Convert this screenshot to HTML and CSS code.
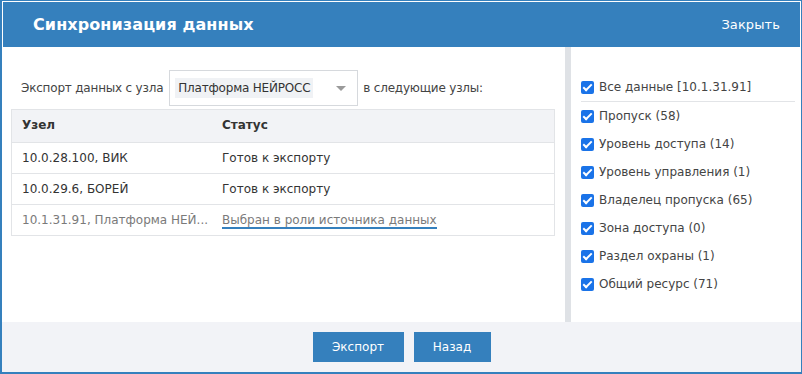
FILE: index.html
```html
<!DOCTYPE html>
<html lang="ru">
<head>
<meta charset="utf-8">
<title>Синхронизация данных</title>
<link rel="stylesheet" href="styles.css">
</head>
<body>
<div class="dialog">
  <div class="header">
    <div class="title">Синхронизация данных</div>
    <div class="close">Закрыть</div>
  </div>
  <div class="content">
    <div class="main">
      <div class="source-row">
        <span class="label">Экспорт данных с узла</span>
        <div class="select">
          <span class="select-value">Платформа НЕЙРОСС</span>
          <span class="arrow"></span>
        </div>
        <span class="label">в следующие узлы:</span>
      </div>
      <div class="table">
        <div class="row head">
          <div class="c1">Узел</div>
          <div class="c2">Статус</div>
        </div>
        <div class="row">
          <div class="c1">10.0.28.100, ВИК</div>
          <div class="c2">Готов к экспорту</div>
        </div>
        <div class="row">
          <div class="c1">10.0.29.6, БОРЕЙ</div>
          <div class="c2">Готов к экспорту</div>
        </div>
        <div class="row source">
          <div class="c1">10.1.31.91, Платформа НЕЙ...</div>
          <div class="c2"><span class="link">Выбран в роли источника данных </span></div>
        </div>
      </div>
    </div>
    <div class="divider"></div>
    <div class="side">
      <label class="check all"><span class="box"></span>Все данные [10.1.31.91]</label>
      <div class="sep"></div>
      <label class="check"><span class="box"></span>Пропуск (58)</label>
      <label class="check"><span class="box"></span>Уровень доступа (14)</label>
      <label class="check"><span class="box"></span>Уровень управления (1)</label>
      <label class="check"><span class="box"></span>Владелец пропуска (65)</label>
      <label class="check"><span class="box"></span>Зона доступа (0)</label>
      <label class="check"><span class="box"></span>Раздел охраны (1)</label>
      <label class="check"><span class="box"></span>Общий ресурс (71)</label>
    </div>
  </div>
  <div class="footer">
    <button class="btn export">Экспорт</button>
    <button class="btn back">Назад</button>
  </div>
</div>
</body>
</html>
```
FILE: styles.css
```css
* { box-sizing: border-box; }
html, body { margin: 0; padding: 0; background: #fff; }
body {
  font-family: "DejaVu Sans", Verdana, sans-serif;
  font-size: 12px;
  color: #333;
}
.dialog {
  width: 802px;
  height: 374px;
  border: 1px solid #3580bd;
  border-left-width: 2px;
  border-bottom-width: 2px;
  padding: 1px 1px 0 1px;
  display: flex;
  flex-direction: column;
  background: #fff;
}
.header {
  height: 45px;
  background: #3580bd;
  color: #fff;
  display: flex;
  align-items: center;
  justify-content: space-between;
  padding: 0 20px 0 30px;
  flex: none;
}
.title { font-size: 16px; font-weight: bold; letter-spacing: 0.1px; }
.close { font-size: 13px; letter-spacing: 0.1px; }
.content {
  flex: 1;
  display: flex;
  min-height: 0;
}
.main {
  width: 562px;
  padding: 23px 0 0 8px;
}
.source-row {
  display: flex;
  align-items: center;
  height: 36px;
  padding-left: 10px;
  letter-spacing: -0.2px;
}
.label { color: #444; }
.select {
  width: 189px;
  height: 36px;
  border: 1px solid #d6d9dd;
  margin: 0 5px 0 6px;
  display: flex;
  align-items: center;
  padding: 0 5px;
  justify-content: space-between;
}
.select-value {
  background: #f0f2f5;
  padding: 3px 3px;
  color: #333;
}
.arrow {
  width: 0; height: 0;
  border-left: 5px solid transparent;
  border-right: 5px solid transparent;
  border-top: 5px solid #9a9a9a;
  margin-right: 6px;
}
.table {
  width: 544px;
  margin-top: 3px;
  border: 1px solid #e2e4e7;
}
.row {
  display: flex;
  height: 31px;
  align-items: center;
  border-top: 1px solid #e2e4e7;
}
.row:first-child { border-top: none; }
.row.head { background: #f2f3f6; font-weight: bold; height: 32px; padding-bottom: 2px; }
.c1 { width: 210px; padding-left: 10px; white-space: nowrap; overflow: hidden; }
.c2 { flex: 1; }
.row.source { color: #7a7a7a; height: 31px; }
.link {
  border-bottom: 2px solid #3580bd;
  padding-bottom: 0;
}
.divider {
  width: 6px;
  background: #dfe2e6;
  flex: none;
}
.side {
  flex: 1;
  padding: 32px 5px 0 10px;
  display: flex;
  flex-direction: column;
}
.check {
  display: flex;
  align-items: center;
  height: 28px;
  color: #444;
}
.check.all { height: 16px; }
.box {
  width: 13px;
  height: 13px;
  border-radius: 2px;
  background: #1a73e8;
  margin-right: 5px;
  position: relative;
  flex: none;
}
.box::after {
  content: "";
  position: absolute;
  left: 4px;
  top: 1.5px;
  width: 3px;
  height: 7px;
  border: solid #fff;
  border-width: 0 2px 2px 0;
  transform: rotate(45deg);
}
.sep {
  height: 1px;
  background: #e2e4e7;
  margin: 6px 0 0 0;
}
.footer {
  height: 50px;
  background: #f2f3f7;
  display: flex;
  justify-content: center;
  align-items: center;
  gap: 10px;
  flex: none;
  margin: 0 -1px;
}
.btn {
  height: 30px;
  background: #3580bd;
  color: #fff;
  border: none;
  font-family: "DejaVu Sans", Verdana, sans-serif;
  font-size: 12px;
  padding: 0;
}
.export { width: 91px; }
.back { width: 77px; }
```
